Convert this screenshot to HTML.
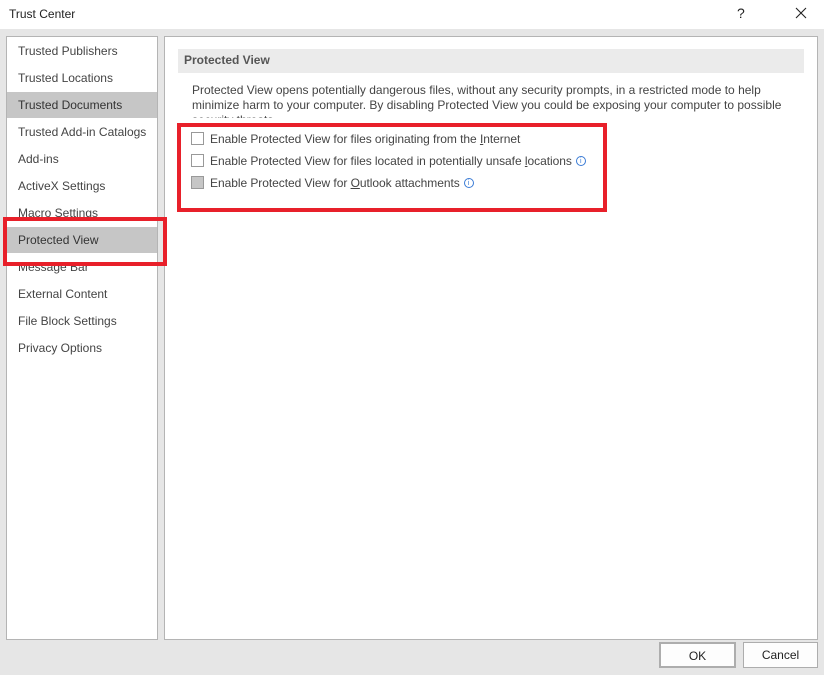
<!DOCTYPE html>
<html><head><style>
*{margin:0;padding:0;box-sizing:border-box}
body{width:824px;height:675px;background:#e6e6e6;font-family:"Liberation Sans",sans-serif;font-size:12px;color:#444;position:relative;overflow:hidden}
.a{position:absolute}
.title{left:0;top:0;width:824px;height:29px;background:#fff}
.nav{left:6px;top:36px;width:152px;height:604px;background:#fff;border:1px solid #b4b4b4}
.nav div{position:absolute;left:0;width:150px;height:26px;line-height:26px;padding-left:11px;white-space:nowrap}
.sel{background:#c6c6c6}
.main{left:164px;top:36px;width:654px;height:604px;background:#fff;border:1px solid #b4b4b4}
.cb{position:absolute;width:13px;height:13px;border:1px solid #999;background:#fff}
.row{position:absolute;left:210px;white-space:nowrap;letter-spacing:-0.05px}
.info{display:inline-block;width:10px;height:10px;border:1px solid #3a7bd5;border-radius:50%;font-size:7px;line-height:9px;text-align:center;color:#3a7bd5;vertical-align:2px;margin-left:4px}
.btn{position:absolute;top:642px;height:26px;background:#fdfdfd;border:1px solid #adadad;text-align:center;line-height:24px;color:#222}
.red{position:absolute;border:4px solid #e8202a}
</style></head><body>
<div class="a title"><span class="a" style="left:9px;top:7px;color:#222">Trust Center</span>
<span class="a" style="left:737px;top:5px;font-size:14px;color:#222">?</span>
<svg class="a" style="left:795px;top:7px" width="12" height="12"><path d="M1 1L11 11M11 1L1 11" stroke="#222" stroke-width="1.1"/></svg></div>
<div class="a nav">
<div style="top:1px">Trusted Publishers</div>
<div style="top:28px">Trusted Locations</div>
<div class="sel" style="top:55px;color:#333">Trusted Documents</div>
<div style="top:82px">Trusted Add-in Catalogs</div>
<div style="top:109px">Add-ins</div>
<div style="top:136px">ActiveX Settings</div>
<div style="top:163px">Macro Settings</div>
<div class="sel" style="top:190px;color:#333">Protected View</div>
<div style="top:217px">Message Bar</div>
<div style="top:244px">External Content</div>
<div style="top:271px">File Block Settings</div>
<div style="top:298px">Privacy Options</div>
</div>
<div class="a main"></div>
<div class="a" style="left:178px;top:49px;width:626px;height:24px;background:#ebebeb;line-height:22px;padding-left:6px;font-weight:bold;color:#555">Protected View</div>
<div class="a" style="left:192px;top:83px;width:610px;line-height:15px;height:39px;overflow:hidden">Protected View opens potentially dangerous files, without any security prompts, in a restricted mode to help minimize harm to your computer. By disabling Protected View you could be exposing your computer to possible security threats.</div>
<div class="a" style="left:176px;top:118px;width:440px;height:8px;background:#fff"></div>
<div class="cb" style="left:191px;top:132px"></div><div class="row" style="top:132px">Enable Protected View for files originating from the <u>I</u>nternet</div>
<div class="cb" style="left:191px;top:154px"></div><div class="row" style="top:154px">Enable Protected View for files located in potentially unsafe <u>l</u>ocations<span class="info">i</span></div>
<div class="cb" style="left:191px;top:176px;background:#c6c6c6"></div><div class="row" style="top:176px">Enable Protected View for <u>O</u>utlook attachments<span class="info">i</span></div>
<div class="red" style="left:177px;top:123px;width:430px;height:89px"></div>
<div class="red" style="left:3px;top:217px;width:164px;height:49px"></div>
<div class="btn" style="left:659px;width:77px;border:2px solid #adadad">OK</div>
<div class="btn" style="left:743px;width:75px">Cancel</div>
</body></html>
